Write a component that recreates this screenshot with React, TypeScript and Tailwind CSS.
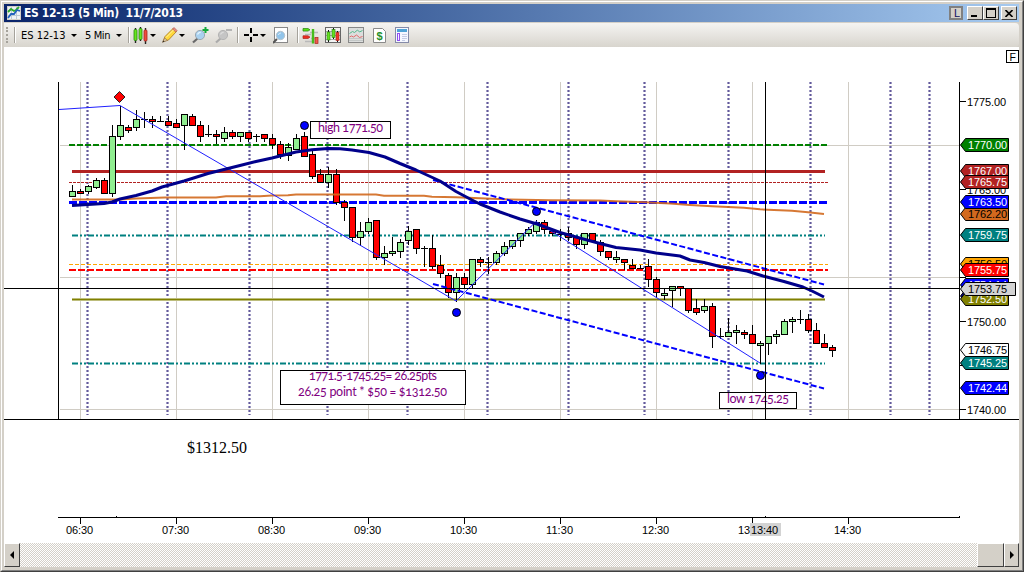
import React from 'react'

type Kind = 'g' | 'r' | 'd'
// high, body top, body bottom, low, kind (up / down / doji)
type Candle = [number, number, number, number, Kind]

const CANDLES: Candle[] = [
  [185, 191, 196, 196, 'g'], [189, 191, 193, 193, 'r'], [185, 186, 191, 193, 'g'], [178, 180, 187, 188, 'g'],
  [178, 180, 193, 193, 'r'], [125, 136, 193, 196, 'g'], [106, 125, 136, 139, 'g'], [125, 127, 130, 132, 'r'],
  [110, 119, 127, 130, 'g'], [112, 119, 119, 127, 'd'], [116, 119, 121, 127, 'r'], [116, 121, 121, 121, 'd'],
  [116, 121, 125, 125, 'r'], [119, 123, 127, 127, 'r'], [114, 114, 125, 149, 'g'], [114, 116, 125, 125, 'r'],
  [121, 125, 136, 141, 'r'], [125, 134, 134, 136, 'd'], [130, 134, 136, 143, 'r'], [127, 132, 138, 141, 'g'],
  [130, 132, 136, 138, 'r'], [132, 132, 136, 141, 'g'], [132, 132, 138, 141, 'r'], [134, 136, 136, 141, 'd'],
  [134, 134, 138, 141, 'r'], [134, 138, 144, 148, 'r'], [141, 144, 154, 158, 'r'], [143, 147, 155, 160, 'g'],
  [134, 138, 149, 149, 'g'], [132, 136, 156, 156, 'r'], [151, 154, 176, 178, 'r'], [169, 174, 182, 182, 'r'],
  [167, 174, 182, 187, 'g'], [169, 174, 202, 204, 'r'], [200, 202, 207, 220, 'r'], [207, 207, 237, 241, 'r'],
  [222, 231, 237, 245, 'g'], [218, 222, 231, 233, 'g'], [220, 220, 257, 259, 'r'], [246, 253, 257, 264, 'g'],
  [237, 251, 253, 255, 'g'], [239, 242, 251, 257, 'g'], [226, 231, 240, 244, 'g'], [229, 229, 248, 253, 'r'],
  [246, 248, 248, 266, 'd'], [235, 248, 266, 268, 'r'], [255, 265, 273, 277, 'r'], [273, 275, 292, 297, 'r'],
  [273, 277, 292, 301, 'g'], [273, 277, 284, 288, 'r'], [259, 259, 284, 288, 'g'], [257, 259, 262, 266, 'r'],
  [257, 262, 262, 273, 'd'], [251, 253, 262, 264, 'g'], [242, 246, 253, 255, 'g'], [240, 240, 246, 248, 'g'],
  [233, 233, 240, 246, 'g'], [227, 229, 233, 235, 'g'], [220, 222, 231, 233, 'g'], [220, 222, 229, 233, 'r'],
  [229, 231, 233, 235, 'r'], [229, 234, 234, 240, 'd'], [227, 233, 237, 240, 'r'], [237, 237, 244, 248, 'r'],
  [233, 233, 244, 248, 'g'], [233, 233, 240, 240, 'r'], [240, 242, 251, 255, 'r'], [251, 251, 257, 259, 'r'],
  [251, 257, 259, 262, 'g'], [259, 259, 262, 269, 'r'], [259, 265, 268, 268, 'r'], [265, 268, 268, 268, 'd'],
  [259, 266, 279, 286, 'r'], [277, 279, 292, 297, 'r'], [289, 293, 295, 299, 'g'], [286, 286, 290, 306, 'g'],
  [286, 286, 288, 295, 'r'], [288, 288, 310, 312, 'r'], [299, 308, 312, 314, 'r'], [299, 306, 310, 312, 'g'],
  [303, 306, 336, 347, 'r'], [328, 336, 336, 338, 'd'], [318, 332, 336, 336, 'g'], [325, 330, 332, 343, 'g'],
  [330, 332, 334, 338, 'r'], [325, 334, 343, 343, 'r'], [341, 343, 345, 363, 'g'], [336, 336, 343, 354, 'g'],
  [330, 334, 336, 343, 'g'], [319, 321, 334, 334, 'g'], [317, 319, 321, 332, 'g'], [310, 319, 319, 323, 'd'],
  [314, 319, 330, 332, 'r'], [323, 330, 343, 343, 'r'], [334, 343, 347, 347, 'r'], [345, 347, 350, 356, 'r'],
]

const SESSION_LINES = [87.5, 167.5, 249.5, 327.5, 407.5, 487.5, 568.5, 644.5, 728.5, 810.5, 890.5, 929.5]

const HOURS = ['06:30', '07:30', '08:30', '09:30', '10:30', '11:30', '12:30', '13:30', '14:30']

const PRICES: [string, number][] = [
  ['1775.00', 101], ['1765.00', 189], ['', 277], ['1750.00', 321], ['', 365], ['1740.00', 409],
]

const TAGS: { label: string; y: number; fill: string; color: string; wide?: boolean }[] = [
  { label: '1770.00', y: 145, fill: '#008000', color: '#fff' },
  { label: '1767.00', y: 171, fill: '#b22222', color: '#fff' },
  { label: '1765.75', y: 182, fill: '#b22222', color: '#fff' },
  { label: '1762.20', y: 214, fill: '#d2691e', color: '#000' },
  { label: '1763.50', y: 202, fill: '#0000ff', color: '#fff' },
  { label: '1759.75', y: 235, fill: '#008080', color: '#fff' },
  { label: '1756.50', y: 264, fill: '#ffa500', color: '#000' },
  { label: '1755.75', y: 270, fill: '#ff0000', color: '#fff' },
  { label: '1754.14', y: 285, fill: '#0000ff', color: '#fff' },
  { label: '', y: 296, fill: '#00008b', color: '#fff' },
  { label: '1752.50', y: 299, fill: '#808000', color: '#fff' },
  { label: '1753.75', y: 289, fill: '#d3d3d3', color: '#000', wide: true },
  { label: '1746.75', y: 350, fill: '#ffffff', color: '#000' },
  { label: '1745.25', y: 363, fill: '#008080', color: '#fff' },
  { label: '1742.44', y: 388, fill: '#0000ff', color: '#fff' },
]

const NAVY_MA =
  '72,205.5 88,204.5 104,203.5 112,202 120,199 136,195.5 152,191 162,187 184,181 208,173.5 232,167.5 240,165.5 256,161.5 272,158 296,152 312,149.8 328,148.5 340,148.8 352,150 369,152.5 385,157 400,163.5 416,170 440,181 456,191.5 472,200 480,204 500,212 520,219 537,224 560,232.5 576,237 600,243.5 616,247.5 640,250 656,253 680,256 690,260 704,262.5 720,266.5 747,271 763,276 784,281.5 803,287 812,291 824,297'

const ORANGE_MA =
  '72,199.5 120,199.5 136,198.5 165,197.5 216,197.5 226,196.3 260,196.3 272,195.5 288,195.3 296,194.5 376,194.5 384,195.7 424,195.7 432,196.7 456,197.3 480,198.3 510,199.5 550,200.3 600,200.5 616,201.3 645,202.3 670,203.5 690,205 712,206.3 744,207.7 760,209.3 792,210.8 808,212.3 824,214'

const Caret = () => <span className="h-0 w-0 border-x-[3px] border-t-[3px] border-x-transparent border-t-black" />

const Divider = () => <span className="h-4 w-[2px] border-l border-r border-l-[#a5a29b] border-r-white" />

const TitleIcon = () => (
  <svg width="14" height="14" viewBox="0 0 14 14">
    <rect x=".5" y=".5" width="13" height="13" fill="#eef2f5" stroke="#d4d0c8" />
    <path d="M1 4.5h12M1 9.5h12M4.5 1v12M9.5 1v12" stroke="#bbc9d6" />
    <path d="M1 6l3-3 3 2 2-1 3-3" stroke="#2daa2d" strokeWidth="1.8" fill="none" />
    <path d="M1 12l3-4h3l3-4 3 1" stroke="#2262bd" strokeWidth="1.8" fill="none" />
  </svg>
)

const BarsIcon = () => (
  <svg width="15" height="17" viewBox="0 0 15 17">
    <path d="M2.5 1v15M7.5 0v14M12.5 1v16" stroke="#222" strokeWidth="1.4" />
    <rect x="1" y="2.5" width="3" height="11" rx="1" fill="#66e61c" stroke="#278310" strokeWidth=".8" />
    <rect x="6" y="1.5" width="3" height="11" rx="1" fill="#66e61c" stroke="#278310" strokeWidth=".8" />
    <rect x="11" y="3" width="3" height="11" rx="1" fill="#ef4d3e" stroke="#a7261c" strokeWidth=".8" />
  </svg>
)

const PencilIcon = () => (
  <svg width="16" height="16" viewBox="0 0 16 16">
    <path d="M1 14.5l2-5L11 1.5l3.5 3L6.5 13z" fill="#ffd83b" stroke="#a77518" strokeWidth=".8" />
    <path d="M10.5 2l1.5-1.5 3 3L13.7 5z" fill="#ef8b80" stroke="#a75b53" strokeWidth=".7" />
    <path d="M4 10.5l7.5-7.5" stroke="#fff4a5" />
    <path d="M.5 15.3l2.2-4.4 2.8 2.5z" fill="#d9c4a0" stroke="#8c6b44" strokeWidth=".6" />
    <path d="M.3 15.6l1.2-2 1 1z" fill="#222" />
  </svg>
)

const LensIcon = ({ plus }: { plus?: boolean }) => (
  <svg width="17" height="17" viewBox="0 0 17 17">
    <path d="M1 15.5l4.5-4" stroke={plus ? '#696969' : '#aaa'} strokeWidth="2.2" />
    <circle cx="8" cy="8" r="4.6" fill={plus ? '#a9d1ef' : '#c5c5c5'} stroke={plus ? '#9aa7b1' : '#b4b4b4'} />
    <path d="M5.5 7.5q1-2.5 3.2-2" stroke={plus ? '#e6f6ff' : '#ddd'} strokeWidth="1.3" fill="none" />
    {plus ? (
      <path d="M13.5 0v6M10.5 3h6" stroke="#12a93b" strokeWidth="2" />
    ) : (
      <path d="M11 3h6" stroke="#b5b5b5" strokeWidth="2" />
    )}
  </svg>
)

const CrossIcon = () => (
  <svg width="14" height="14" viewBox="0 0 14 14" shapeRendering="crispEdges">
    <path d="M7 0v5M7 9v5M0 7h5M9 7h5" stroke="#000" strokeWidth="2" />
  </svg>
)

const PageLensIcon = () => (
  <svg width="16" height="17" viewBox="0 0 16 17">
    <rect x="1.5" y=".5" width="13" height="15" fill="#fff" stroke="#888" />
    <path d="M0 16l4-4" stroke="#555" strokeWidth="2" />
    <circle cx="7.5" cy="8.5" r="4.2" fill="#91c4ea" stroke="#b9c4cc" />
    <path d="M5.4 8q.6-2 2.5-2" stroke="#dff0fb" fill="none" />
  </svg>
)

const TraderIcon = () => (
  <svg width="17" height="17" viewBox="0 0 17 17">
    <path d="M8 5.5h8M3 7.5h6M9 11.5h7M3 14.5h8" stroke="#b9b9b9" strokeWidth="1.5" />
    <path d="M1 1.5h5l2 1.3-2 1.3H1z" fill="#57e014" stroke="#278310" strokeWidth=".7" />
    <path d="M1 8.8h5l2 1.3-2 1.4H1z" fill="#ef2b20" stroke="#a7261c" strokeWidth=".7" />
    <path d="M11 2v14.5" stroke="#46bd1b" strokeWidth="2.4" />
    <rect x="13" y="10.5" width="3" height="6" fill="#ef5b50" stroke="#a7261c" strokeWidth=".7" />
  </svg>
)

const CandleIcon = () => (
  <svg width="16" height="16" viewBox="0 0 16 16">
    <rect x=".5" y=".5" width="15" height="15" fill="#f4f4f4" stroke="#666" />
    <path d="M1 4.5h14M1 8.5h14M1 12.5h14" stroke="#aaa" />
    <path d="M3.5 3v12M8.5 1v11M12.5 4v11" stroke="#111" />
    <rect x="2" y="5" width="3" height="8" fill="#65df20" stroke="#278310" strokeWidth=".6" />
    <rect x="7" y="2.5" width="3" height="8" fill="#65df20" stroke="#278310" strokeWidth=".6" />
    <rect x="11" y="5.5" width="3" height="8" fill="#ef3529" stroke="#a7261c" strokeWidth=".6" />
  </svg>
)

const IndicatorIcon = () => (
  <svg width="16" height="16" viewBox="0 0 16 16">
    <rect x=".5" y=".5" width="15" height="15" fill="#dcdedd" stroke="#888" />
    <path d="M1 11.5h14M1 13.5h14" stroke="#c3c7c6" />
    <path d="M1.5 6.5l3-2 2 1 3-2.5 2 2 3-1.5" stroke="#51b98c" fill="none" />
    <path d="M1.5 10l2-1 2 1 3-2 3 2.5 3-1" stroke="#e06a6a" fill="none" />
  </svg>
)

const DollarIcon = () => (
  <svg width="13" height="15" viewBox="0 0 13 15">
    <path d="M.5.5h9l3 3v11H.5z" fill="#fff" stroke="#8a8a8a" />
    <text x="6.5" y="11.5" textAnchor="middle" fontSize="11" fontWeight="bold" fill="#24902a" fontFamily="Liberation Sans">$</text>
  </svg>
)

const PropsIcon = () => (
  <svg width="14" height="16" viewBox="0 0 14 16" shapeRendering="crispEdges">
    <rect x=".5" y=".5" width="13" height="15" fill="#f6f8ff" stroke="#858ba8" />
    <rect x="2" y="2" width="10" height="3" fill="#4fa3d6" />
    <rect x="2.5" y="6.5" width="2" height="7" fill="#f7eeff" stroke="#8f50f0" />
    <path d="M7 7.5h5M7 9.5h5M7 11.5h5M7 13.5h3" stroke="#c4cce6" />
  </svg>
)

const bevel = 'border border-t-white border-l-white border-r-[#404040] border-b-[#404040] bg-[#d4d0c8]'

const TitleBar = () => (
  <div className="flex h-[18px] shrink-0 items-center bg-linear-to-r from-[#0a246a] to-[#a6caf0] pl-[3px] pr-[2px]">
    <TitleIcon />
    <span className="ml-[3px] flex-1 whitespace-pre font-['DejaVu_Sans_Condensed'] text-[12px] leading-none font-bold tracking-[-0.36px] text-white">
      {'ES 12-13 (5 Min)  11/7/2013'}
    </span>
    <span className="mr-1 flex h-[14px] w-[14px] items-center justify-center border-2 border-[#808080] bg-[#d4d0c8] pl-[2px] font-['Liberation_Sans'] text-[11px] leading-none text-[#101060]">
      L
    </span>
    <span className={`flex h-[14px] w-4 items-end pb-[2px] pl-[3px] ${bevel}`}>
      <span className="h-[2px] w-[6px] bg-black" />
    </span>
    <span className={`flex h-[14px] w-4 items-center justify-center ${bevel}`}>
      <span className="h-[10px] w-[10px] border border-t-2 border-black" />
    </span>
    <span className={`ml-[2px] flex h-[14px] w-4 items-center justify-center ${bevel}`}>
      <svg width="8" height="7" viewBox="0 0 8 7">
        <path d="M.5 0l7 7M7.5 0l-7 7" stroke="#000" strokeWidth="1.6" />
      </svg>
    </span>
  </div>
)

const Toolbar = () => (
  <div className="mt-px flex h-6 shrink-0 items-center rounded-r bg-linear-to-b from-[#f5f4f2] to-[#d8d5ce] font-['DejaVu_Sans_Condensed'] text-[11px] leading-none text-black">
    <div className="flex w-[17px] items-center gap-[6px] pl-[2px]">
      <span className="h-4 border-l-2 border-dotted border-[#a5a29b]" />
      <Divider />
    </div>
    <span className="w-[50px] whitespace-nowrap">ES 12-13</span>
    <Caret />
    <span className="ml-2 w-[31px] whitespace-nowrap tracking-[-0.4px]">5 Min</span>
    <Caret />
    <span className="mr-[3px] ml-[6px] flex"><Divider /></span>
    <BarsIcon />
    <span className="mr-[6px] ml-[2px] flex"><Caret /></span>
    <PencilIcon />
    <span className="mr-[7px] ml-[1px] flex"><Caret /></span>
    <LensIcon plus />
    <span className="mr-[5px] ml-[6px] flex"><LensIcon /></span>
    <Divider />
    <span className="mr-[2px] ml-[5px] flex"><CrossIcon /></span>
    <Caret />
    <span className="mr-2 ml-[7px] flex"><PageLensIcon /></span>
    <Divider />
    <div className="ml-[3px] flex items-center">
      <TraderIcon />
      <span className="ml-[6px] flex"><CandleIcon /></span>
      <span className="ml-[7px] flex"><IndicatorIcon /></span>
      <span className="ml-[9px] flex"><DollarIcon /></span>
      <span className="ml-[9px] flex"><PropsIcon /></span>
    </div>
  </div>
)

const PriceAxis = () => (
  <g fontFamily="Liberation Sans" fontSize="11">
    {PRICES.map(([label, y]) => (
      <g key={y}>
        <path d={`M960 ${y + 0.5}h6`} stroke="#000" />
        {label && <text x="967" y={y + 5} textLength="39">{label}</text>}
      </g>
    ))}
    {TAGS.map((t) => (
      <g key={t.y}>
        <path
          d={`M960.5 ${t.y}l5-6.5H${t.wide ? 1015.5 : 1008.5}v13H965.5z`}
          fill={t.fill}
          stroke="#000"
        />
        {t.label && <text x="968" y={t.y + 4} textLength="39" fill={t.color}>{t.label}</text>}
      </g>
    ))}
  </g>
)

const Candles = () => (
  <g stroke="#000" shapeRendering="crispEdges">
    {CANDLES.map(([high, top, bottom, low, kind], i) => {
      const x = 72.5 + i * 8
      return (
        <g key={i}>
          <path d={`M${x} ${high}V${low + 1}`} />
          {kind === 'd' ? (
            <path d={`M${x - 3.5} ${top + 0.5}h7`} />
          ) : (
            <rect
              x={x - 3}
              y={top + 0.5}
              width="6"
              height={bottom - top}
              fill={kind === 'g' ? '#90ee90' : '#ff0000'}
            />
          )}
        </g>
      )
    })}
  </g>
)

const Note = ({ x, y, w, h, children }: { x: number; y: number; w: number; h: number; children: React.ReactNode }) => (
  <g className="[font-variant-numeric:oldstyle-nums]" fontFamily="Lato" fontSize="12.5" fill="#800080">
    <rect x={x} y={y} width={w} height={h} fill="#fff" stroke="#000" shapeRendering="crispEdges" />
    {children}
  </g>
)

const Chart = () => (
  <svg className="block shrink-0" width="1015" height="496" viewBox="4 47 1015 496">
    <rect x="4" y="47" width="1015" height="496" fill="#fff" />

    {/* grid */}
    <g stroke="#d0ccc4" shapeRendering="crispEdges">
      {HOURS.map((h, i) => (
        <path key={h} d={`M${80.5 + i * 96} 82V419`} />
      ))}
      <path d="M60 145.5H959M60 277.5H959M60 409.5H959" />
    </g>
    {SESSION_LINES.map((x) => (
      <path key={x} d={`M${x} 82V415`} stroke="#483d8b" strokeOpacity=".85" strokeWidth="2.2" strokeDasharray="2 2" />
    ))}

    {/* level lines */}
    <g fill="none" shapeRendering="crispEdges">
      <path d="M69 145H828" stroke="#008000" strokeWidth="2" strokeDasharray="6 2" />
      <path d="M72 171.5H825" stroke="#b22222" strokeWidth="3" />
      <path d="M69 182.5H828" stroke="#b22222" strokeDasharray="3 1" />
      <path d="M69 202.5H828" stroke="#0000ff" strokeWidth="3" strokeDasharray="8 2" />
      <path d="M69 264.5H828" stroke="#ffa500" strokeDasharray="4 2" />
      <path d="M69 270H828" stroke="#ff0000" strokeWidth="2" strokeDasharray="7 2" />
      <path d="M72 299.5H825" stroke="#bdbd7c" strokeWidth="3" />
      <path d="M72 299.5H825" stroke="#808000" />
    </g>
    <path d="M72 235.5H825M72 363.5H825" stroke="#008080" strokeWidth="2" strokeDasharray="6 2 2 2 2 2" />

    <Candles />

    {/* averages, swings and channel */}
    <g fill="none">
      <polyline points={ORANGE_MA} stroke="#d2691e" strokeOpacity=".9" strokeWidth="2" />
      <polyline points="59,109.5 120,105.5 456,301 536,221.5 760,363" stroke="#2020ff" strokeWidth="1" />
      <path d="M433 180L824 284.5M433 284L824 388.5" stroke="#0000ff" strokeWidth="2" strokeDasharray="6 2.5" />
      <polyline points={NAVY_MA} stroke="#00008b" strokeWidth="3" strokeLinejoin="round" />
    </g>

    <path d="M119.5 91.5l5.5 5.5-5.5 5.5-5.5-5.5z" fill="#ff0000" stroke="#222" />
    {[[304.5, 125.5], [456.5, 312.5], [536.5, 211.5], [760.5, 375.5]].map(([x, y]) => (
      <circle key={x} cx={x} cy={y} r="4" fill="#0000ff" stroke="#000" />
    ))}

    <Note x={310.5} y={121.5} w={80} h={17}>
      <text x="318" y="132" textLength="65">high 1771.50</text>
    </Note>
    <Note x={280.5} y={370.5} w={185} h={34}>
      <text x="309" y="380" textLength="128">1771.5-1745.25= 26.25pts</text>
      <text x="298" y="396" textLength="149">26.25 point * $50 = $1312.50</text>
    </Note>
    <Note x={719.5} y={392.5} w={77} h={16}>
      <text x="727" y="403" textLength="62">low 1745.25</text>
    </Note>

    {/* frame and crosshair */}
    <g stroke="#000" shapeRendering="crispEdges">
      <path d="M58.5 82V419M959.5 82V419M4 419.5H1019" />
      <path d="M4 288.5H960M765.5 82V419" />
      <path d="M58 517.5H960M116.5 516v1M765.5 516v1M959.5 516v1" />
    </g>
    <PriceAxis />

    {/* time scale */}
    <g fontFamily="Liberation Sans" fontSize="11">
      {HOURS.map((h, i) => (
        <g key={h}>
          <path d={`M${80.5 + i * 96} 517v7`} stroke="#000" shapeRendering="crispEdges" />
          <text x={66 + i * 96} y="534" textLength="27">{h}</text>
        </g>
      ))}
      <rect x="750" y="523" width="31" height="13" fill="#d3d3d3" />
      <text x="751" y="534" textLength="27">13:40</text>
    </g>

    <text x="187" y="453" fontFamily="Liberation Serif" fontSize="16" textLength="60">$1312.50</text>

    <rect x="1006.5" y="50.5" width="12" height="12" fill="#fff" stroke="#000" shapeRendering="crispEdges" />
    <text x="1009.5" y="60.5" fontFamily="Liberation Sans" fontSize="10.5">F</text>
  </svg>
)

const ScrollBar = () => (
  <div className="flex h-6 shrink-0 bg-[#d4d0c8] bg-[repeating-conic-gradient(#ffffff_0_25%,#d4d0c8_0_50%)] bg-[size:2px_2px]">
    <span className={`flex w-4 items-center justify-center ${bevel}`}>
      <span className="border-y-4 border-r-4 border-y-transparent border-r-black" />
    </span>
    <span className="flex-1" />
    <span className={`w-[27px] ${bevel}`} />
    <span className={`flex w-[15px] items-center justify-center ${bevel}`}>
      <span className="border-y-4 border-l-4 border-y-transparent border-l-black" />
    </span>
  </div>
)

export default function App() {
  return (
    <div className="h-[572px] w-[1024px] overflow-hidden border-t border-r border-b border-l border-t-[#d4d0c8] border-r-[#404040] border-b-[#404040] border-l-[#d4d0c8] bg-[#d4d0c8]">
      <div className="flex h-full flex-col border border-t-white border-r-[#808080] border-b-[#808080] border-l-white p-[2px] pr-[3px]">
        <TitleBar />
        <Toolbar />
        <Chart />
        <ScrollBar />
      </div>
    </div>
  )
}
